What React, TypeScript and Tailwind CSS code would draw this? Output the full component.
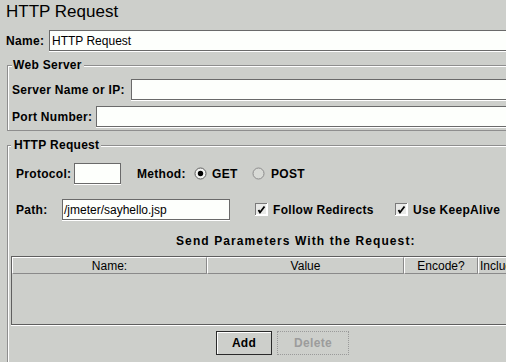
import React from 'react';

const Field: React.FC<{ value?: string; className?: string }> = ({ value = '', className = '' }) => (
  <div
    className={`h-[21px] bg-[#fdfffc] border border-[#6a6a6a] shadow-[0_1px_0_#ffffff] pl-[2px] flex items-center text-[12px] font-normal tracking-normal whitespace-nowrap overflow-hidden ${className}`}
  >
    {value}
  </div>
);

const Radio: React.FC<{ checked?: boolean }> = ({ checked }) => (
  <svg width="13" height="13" viewBox="0 0 13 13" className="shrink-0">
    <circle cx="6.5" cy="6.5" r="5.5" fill={checked ? '#f2f3f1' : '#d8dad6'} stroke={checked ? '#5e5e5e' : '#8c8c8c'} strokeWidth="1" />
    {checked && <circle cx="6.5" cy="6.5" r="2.7" fill="#000" />}
  </svg>
);

const Check: React.FC = () => (
  <svg width="13" height="13" viewBox="0 0 13 13" className="shrink-0">
    <rect x="0" y="0" width="13" height="13" fill="#ffffff" />
    <rect x="0" y="0" width="12" height="12" fill="#7a7a7a" />
    <rect x="1" y="1" width="11" height="11" fill="#ffffff" />
    <rect x="1" y="1" width="10" height="10" fill="#e9eae8" />
    <path d="M3.5 7 L5 9.5 L9.5 3.5" fill="none" stroke="#000" strokeWidth="1.8" />
  </svg>
);

const HeaderCell: React.FC<{ label: string; className?: string }> = ({ label, className = '' }) => (
  <div
    className={`h-[17px] border-t border-l border-t-white border-l-white border-r border-b border-r-[#8a8a8a] border-b-[#8a8a8a] flex items-center text-[12px] font-normal tracking-normal whitespace-nowrap overflow-hidden ${className}`}
  >
    {label}
  </div>
);

export default function App() {
  return (
    <div className="w-[506px] h-[362px] overflow-hidden bg-[#cdcfcb] text-black font-['Liberation_Sans',Arial,sans-serif]">
      <div className="w-[560px]">
        <div className="pl-[6px] pt-[2px] text-[17px] leading-[20px]">HTTP Request</div>

        {/* Name */}
        <div className="flex items-center pl-[6px] mt-[8px] text-[12px] font-bold tracking-[0.3px]">
          <span className="w-[43px]">Name:</span>
          <Field value="HTTP Request" className="flex-1" />
        </div>

        {/* Web Server */}
        <fieldset className="ml-[7px] mt-[6px] border border-[#8e8e8e] shadow-[inset_1px_1px_0_#ffffff] pl-[4px] pt-[6px] pb-[3px] text-[12px] font-bold tracking-[0.3px]">
          <legend className="bg-[#cdcfcb] pl-[1px] pr-[2px] leading-[16px]">Web Server</legend>
          <div className="flex items-center">
            <span className="w-[119px]">Server Name or IP:</span>
            <Field className="flex-1" />
          </div>
          <div className="flex items-center mt-[6px]">
            <span className="w-[84px]">Port Number:</span>
            <Field className="flex-1" />
          </div>
        </fieldset>

        {/* HTTP Request */}
        <fieldset className="ml-[7px] mt-[6px] border border-[#8e8e8e] shadow-[inset_1px_1px_0_#ffffff] pl-[3px] pt-[10px] pb-[20px] text-[12px] font-bold tracking-[0.3px]">
          <legend className="bg-[#cdcfcb] pl-[3px] pr-[2px] leading-[16px]">HTTP Request</legend>

          <div className="flex items-center pl-[5px]">
            <span className="w-[58px]">Protocol:</span>
            <Field className="w-[47px]" />
            <span className="ml-[16px] w-[57px]">Method:</span>
            <Radio checked />
            <span className="ml-[5px] w-[40px]">GET</span>
            <Radio />
            <span className="ml-[6px]">POST</span>
          </div>

          <div className="flex items-center pl-[5px] mt-[15px]">
            <span className="w-[46px]">Path:</span>
            <Field value="/jmeter/sayhello.jsp" className="w-[168px] !pl-[1px]" />
            <span className="ml-[25px]">
              <Check />
            </span>
            <span className="ml-[5px] w-[122px]">Follow Redirects</span>
            <Check />
            <span className="ml-[5px]">Use KeepAlive</span>
          </div>

          <div className="mt-[13px] leading-[16px] pl-[165px] tracking-[1.1px]">Send Parameters With the Request:</div>

          {/* Table */}
          <div className="mt-[7px] border border-[#5f5f5f] shadow-[0_1px_0_#ffffff]">
            <div className="flex">
              <HeaderCell label="Name:" className="w-[195px] justify-center" />
              <HeaderCell label="Value" className="w-[197px] justify-center" />
              <HeaderCell label="Encode?" className="w-[74px] justify-center" />
              <HeaderCell label="Include Equals?" className="flex-1 pl-[1px]" />
            </div>
            <div className="h-[50px]" />
          </div>

          <div className="flex items-center mt-[6px] pl-[205px] gap-[5px]">
            <button className="w-[56px] h-[24px] border border-[#2a2a2a] shadow-[inset_1px_1px_0_#ffffff] bg-[#cdcfcb] text-[12px] font-bold">
              Add
            </button>
            <button className="w-[72px] h-[24px] border border-dotted border-[#9a9a9a] bg-[#cdcfcb] text-[12px] font-bold text-[#9c9c9c]">
              Delete
            </button>
          </div>
        </fieldset>
      </div>
    </div>
  );
}
